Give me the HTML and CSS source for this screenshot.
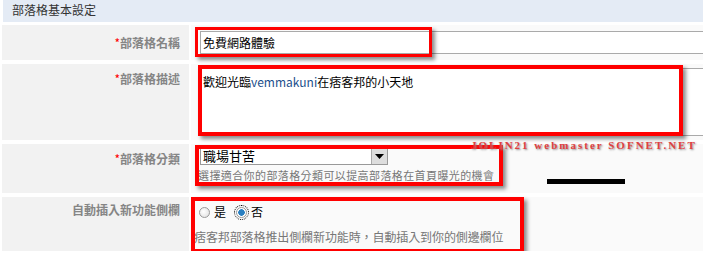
FILE: index.html
```html
<!DOCTYPE html>
<html lang="zh-Hant">
<head>
    <meta charset="UTF-8">
    <title>部落格基本設定</title>
    <link rel="stylesheet" href="styles.css">
</head>
<body>

<div class="panel">
    <div class="panel-head">部落格基本設定</div>

    <!-- 名稱 -->
    <div class="row row-name">
        <div class="label"><span class="req">*</span>部落格名稱</div>
        <div class="field">
            <input type="text" class="text-input" value="免費網路體驗">
            <div class="mark mark-name"></div>
        </div>
    </div>

    <!-- 描述 -->
    <div class="row row-desc">
        <div class="label"><span class="req">*</span>部落格描述</div>
        <div class="field">
            <div class="text-area">歡迎光臨<span class="nick">vemmakuni</span>在痞客邦的小天地</div>
            <div class="mark mark-desc"></div>
        </div>
    </div>

    <!-- 分類 -->
    <div class="row row-cat">
        <div class="label"><span class="req">*</span>部落格分類</div>
        <div class="field">
            <div class="select">
                <span class="select-value">職場甘苦</span>
                <span class="select-btn"><svg width="9" height="5" viewBox="0 0 9 5"><path d="M0 0h9L4.5 5z" fill="#000"/></svg></span>
            </div>
            <div class="hint hint-cat">選擇適合你的部落格分類可以提高部落格在首頁曝光的機會</div>
            <div class="mark mark-cat"></div>
            <div class="watermark">JOLIN21 webmaster SOFNET.NET</div>
            <div class="blackbar"></div>
        </div>
    </div>

    <!-- 側欄 -->
    <div class="row row-side">
        <div class="label">自動插入新功能側欄</div>
        <div class="field">
            <div class="radios">
                <label class="radio"><span class="dot"></span>是</label>
                <label class="radio"><span class="dot dot-on"></span>否</label>
            </div>
            <div class="hint hint-side">痞客邦部落格推出側欄新功能時，自動插入到你的側邊欄位</div>
            <div class="mark mark-side"></div>
        </div>
    </div>
</div>

</body>
</html>
```

FILE: styles.css
```css
body {
    margin: 0;
    background: #fff;
    font-family: "Noto Sans CJK TC", "Liberation Sans", sans-serif;
    font-size: 12px;
    color: #000;
    overflow: hidden;
}
.panel {
    width: 703px;
}
.panel-head {
    margin-left: 3px;
    height: 22px;
    line-height: 20px;
    padding-left: 9px;
    background-color: #e4ebf5;
    color: #333;
}
.row {
    display: grid;
    grid-template-columns: 187px 1fr;
    column-gap: 2px;
    margin-left: 2px;
    margin-top: 3px;
}
.row-desc, .row-cat, .row-side {
    margin-top: 4px;
}
.row-name { height: 35px; }
.row-desc { height: 76px; }
.row-cat { height: 49px; }
.row-side { height: 54px; }

.label {
    background-color: #f2f2f2;
    text-align: right;
    padding-right: 9px;
    font-weight: bold;
    color: #858585;
    line-height: 16px;
}
.row-name .label { padding-top: 10px; }
.row-desc .label { padding-top: 7px; }
.row-cat .label { padding-top: 7px; }
.row-side .label { padding-top: 5px; }
.req {
    color: #f00;
    font-weight: normal;
}

.field {
    position: relative;
    background-color: #fafafa;
    padding-left: 9px;
}
.text-input {
    box-sizing: border-box;
    margin: 6px 0 0;
    width: 520px;
    height: 23px;
    border: 1px solid #aaa;
    padding: 0 2px;
    font: 12px "Noto Sans CJK TC", sans-serif;
    background: #fff;
    outline: none;
}
.text-area {
    box-sizing: border-box;
    margin-top: 4px;
    width: 520px;
    height: 68px;
    border: 1px solid #aaa;
    padding: 5px 2px;
    background: #fff;
    line-height: 16px;
}
.nick {
    color: #1c4f8c;
}
.select {
    display: flex;
    box-sizing: border-box;
    margin-top: 3px;
    width: 188px;
    height: 18px;
    border: 1px solid #999;
    background: #fff;
}
.select-value {
    flex: 1;
    padding-left: 2px;
    line-height: 16px;
    font-size: 13px;
}
.select-btn {
    width: 15px;
    background: #ddd;
    border-left: 1px solid #aaa;
    display: flex;
    align-items: center;
    justify-content: center;
}
.hint {
    color: #777;
    line-height: 14px;
}
.hint-cat {
    margin-left: -2px;
    margin-top: 3px;
    font-size: 11px;
    letter-spacing: 0.4px;
}
.hint-side {
    margin-left: -6px;
    margin-top: 11px;
    letter-spacing: -0.1px;
}
.radios {
    display: flex;
    gap: 10px;
    padding-top: 8px;
    margin-left: -1px;
}
.radio {
    display: flex;
    align-items: center;
    gap: 4px;
    line-height: 14px;
}
.dot {
    box-sizing: border-box;
    width: 11px;
    height: 11px;
    border-radius: 50%;
    border: 1px solid #999;
    background: radial-gradient(circle at 40% 40%, #fff, #ddd);
}
.dot-on {
    background: radial-gradient(circle, #2a7fc0 0 3px, #fff 3.5px);
    outline: 1px dotted #000;
    outline-offset: 1px;
}

/* red annotation boxes drawn over the form */
.mark {
    position: absolute;
    box-sizing: border-box;
    border: 4px solid #f00;
    box-shadow: 3px 3px 4px rgba(0, 0, 0, 0.45);
}
.mark-name { left: 4px; top: 2px; width: 237px; height: 30px; border-width: 3px; }
.mark-desc { left: 7px; top: 1px; width: 485px; height: 71px; }
.mark-cat { left: 4px; top: 1px; width: 308px; height: 41px; }
.mark-side { left: 0; top: 0; width: 333px; height: 56px; }

.watermark {
    position: absolute;
    left: 280px;
    top: -5px;
    font-family: "Liberation Serif", serif;
    font-weight: bold;
    font-size: 11px;
    letter-spacing: 2px;
    color: #e04040;
    text-shadow: 1px 1px 2px #888;
    white-space: nowrap;
}
.blackbar {
    position: absolute;
    left: 356px;
    top: 35px;
    width: 78px;
    height: 5px;
    background: #000;
}
```
